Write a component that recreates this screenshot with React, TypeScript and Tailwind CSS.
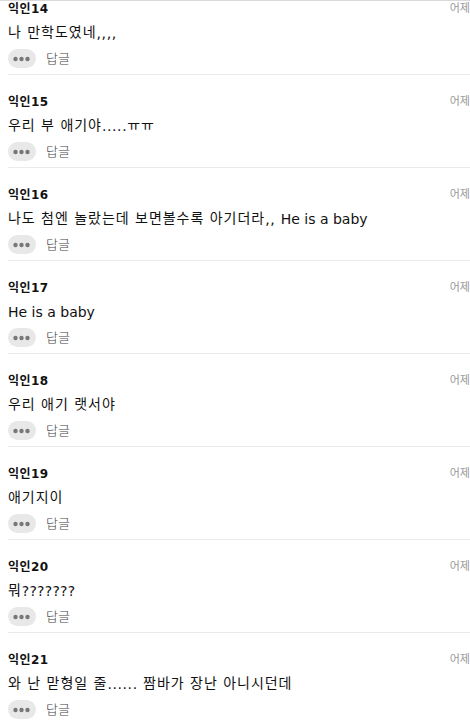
const comments = [
  { author: '익인14', text: '나 만학도였네,,,,' },
  { author: '익인15', text: '우리 부 애기야.....ㅠㅠ' },
  { author: '익인16', text: '나도 첨엔 놀랐는데 보면볼수록 아기더라,, He is a baby' },
  { author: '익인17', text: 'He is a baby' },
  { author: '익인18', text: '우리 애기 랫서야' },
  { author: '익인19', text: '애기지이' },
  { author: '익인20', text: '뭐???????' },
  { author: '익인21', text: '와 난 맏형일 줄...... 짬바가 장난 아니시던데' },
];

// Hangul, punctuation and Latin runs are spaced differently
function runClass(run: string) {
  if (/^[,.]/.test(run)) return 'tracking-[0.6px]';
  if (/^\?/.test(run)) return 'tracking-[0.2px]';
  if (/^[A-Z]/.test(run)) return '';
  return 'align-[1px] leading-none tracking-[0.97px]';
}

function CommentText({ text }: { text: string }) {
  return (
    <p className="h-8 whitespace-nowrap text-[14px] leading-8 text-[#111]">
      {text.split(/([,.]+|\?+|[A-Z][A-Za-z ]+)/).filter(Boolean).map((run, i) => (
        <span key={i} className={runClass(run)}>{run}</span>
      ))}
    </p>
  );
}

function MoreButton() {
  return (
    <button className="flex h-[19px] w-[28px] items-center justify-center rounded-full bg-[#e8e8e8]">
      <svg width="18" height="6" viewBox="0 0 18 6" fill="#777">
        <circle cx="2.5" cy="3" r="2.2" />
        <circle cx="8.5" cy="3" r="2.2" />
        <circle cx="14.5" cy="3" r="2.2" />
      </svg>
    </button>
  );
}

export default function App() {
  return (
    <div className="h-[720px] overflow-hidden border-t border-[#d9d9d9] bg-white pl-2 font-['DejaVu_Sans','Noto_Sans_CJK_KR',sans-serif]">
      {comments.map((c) => (
        <div key={c.author} className="h-[93px] border-b border-[#ebebeb] pt-[19px] first:h-[74px] first:pt-0">
          <div className="flex h-4 items-center justify-between whitespace-nowrap">
            <span className="text-[12px] font-bold tracking-[0.4px] text-[#111]">{c.author}</span>
            <span className="pt-px text-[11px] text-[#999]">어제</span>
          </div>
          <CommentText text={c.text} />
          <div className="flex h-[19px] items-center gap-[10px]">
            <MoreButton />
            <span className="text-[13px] leading-[17px] font-light text-[#444]">답글</span>
          </div>
        </div>
      ))}
    </div>
  );
}
